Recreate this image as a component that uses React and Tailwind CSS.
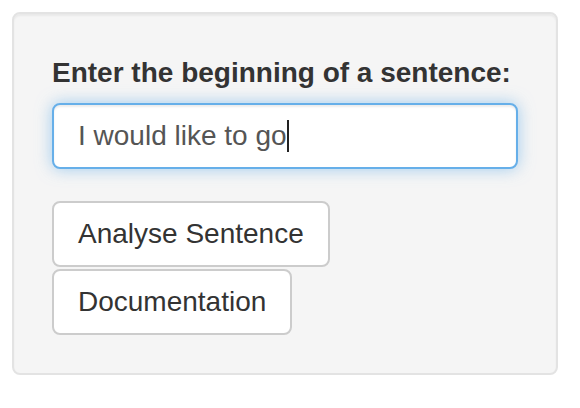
import React from 'react';

const App = () => {
  const buttons = ['Analyse Sentence', 'Documentation'];

  return (
    <div className="min-h-screen bg-white pt-[12px] pl-[12px] font-['Liberation_Sans',Arial,sans-serif]">
      {/* Well panel */}
      <div className="w-[546px] rounded-[8px] border-2 border-[#e3e3e3] bg-[#f5f5f5] px-[38px] pt-[39px] pb-[38px] shadow-[inset_0_2px_2px_rgba(0,0,0,0.05)]">
        <label className="block mb-[10px] text-[28px] leading-[40px] font-bold text-[#333]">
          Enter the beginning of a sentence:
        </label>
        <div className="flex items-center h-[66px] w-full rounded-[8px] border-2 border-[#66afe9] bg-white px-[24px] text-[28px] text-[#555] shadow-[inset_0_2px_2px_rgba(0,0,0,0.075),0_0_16px_rgba(102,175,233,0.6)]">
          <span>I would like to go</span>
          <span className="w-[2px] h-[32px] bg-[#222]" />
        </div>

        {/* Actions */}
        <div className="mt-[32px] flex flex-col items-start gap-[2px]">
          {buttons.map((label) => (
            <button
              key={label}
              className="h-[66px] rounded-[8px] border-2 border-[#ccc] bg-white px-[24px] text-[28px] text-[#333]"
            >
              {label}
            </button>
          ))}
        </div>
      </div>
    </div>
  );
};

export default App;
